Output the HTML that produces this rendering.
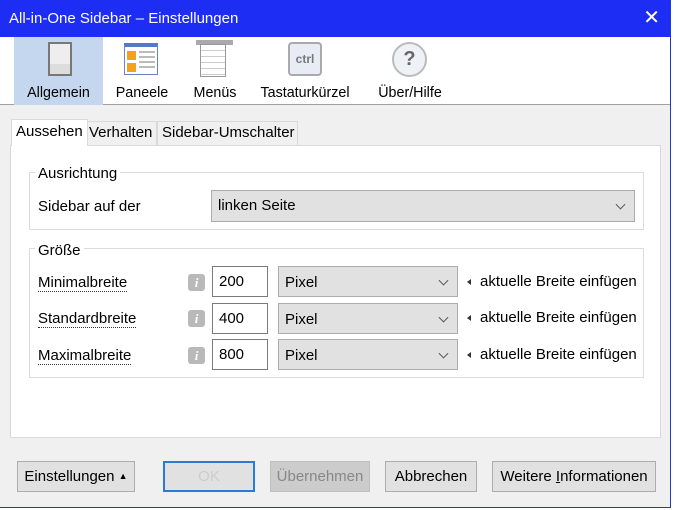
<!DOCTYPE html>
<html><head><meta charset="utf-8"><style>
*{box-sizing:border-box;margin:0;padding:0}
body{width:679px;height:510px;background:#fff;font-family:"Liberation Sans",sans-serif;font-size:15px;color:#000;position:relative;overflow:hidden}
.win{position:absolute;left:0;top:0;width:671px;height:508px;background:#f0f0f0;border-right:1px solid #1a3ad0;border-bottom:1px solid #1a3ad0}
.title{position:absolute;left:0;top:0;width:670px;height:37px;background:#1e2df3;color:#fff;font-size:15px;line-height:37px;padding-left:9px}
.x{position:absolute;right:10px;top:0;font-size:20px;color:#fff}
.tb{position:absolute;left:0;top:37px;width:670px;height:68px;background:#fff;border-bottom:1px solid #a0a0a0}
.ti{position:absolute;top:0;height:68px;text-align:center;font-size:14.3px}
.ti span{position:absolute;bottom:4px;left:0;right:0}
.abs{position:absolute}
.tab{position:absolute;top:121px;height:24px;border:1px solid #d9d9d9;border-bottom:none;background:#f0f0f0;line-height:22px;padding:0 4px;white-space:nowrap}
.panel{position:absolute;left:10px;top:145px;width:651px;height:293px;background:#fff;border:1px solid #d9d9d9}
.grp{position:absolute;border:1px solid #dcdcdc}
.lg{position:absolute;background:#fff;padding:0 3px}
.sel{position:absolute;background:#e1e1e1;border:1px solid #adadad;padding-left:6px}
.chev{position:absolute;right:10px;top:50%;width:7px;height:7px;border-right:1px solid #555;border-bottom:1px solid #555;transform:translateY(-70%) rotate(45deg)}
.inp{position:absolute;width:56px;height:31px;border:1px solid #7a7a7a;background:#fff;padding-left:6px;line-height:29px}
.lbl{position:absolute;left:38px;border-bottom:1px dotted #333;line-height:17px}
.info{position:absolute;left:188px;width:17px;height:17px;background:#b9b9b9;border-radius:3px;color:#fff;font-weight:bold;font-style:italic;font-size:13px;text-align:center;line-height:17px;font-family:"Liberation Serif",serif}
.ins{position:absolute;left:467px;white-space:nowrap}
.ins:before{content:"";position:absolute;left:0;top:6px;border:3px solid transparent;border-right:4px solid #333;border-left:none}
.btn{position:absolute;top:461px;height:31px;border:1px solid #adadad;background:#e1e1e1;text-align:center;line-height:29px;white-space:nowrap}
</style></head><body>
<div class="win">
<div class="title">All-in-One Sidebar – Einstellungen<span class="x">✕</span></div>
<div class="tb">
 <div class="ti" style="left:14px;width:89px;background:#c5d6ef"><div class="abs" style="left:34px;top:5px;width:24px;height:34px;border:2px solid #777;background:#eee;box-shadow:inset 0 -10px 0 #ddd"></div><span>Allgemein</span></div>
 <div class="ti" style="left:106px;width:72px"><div class="abs" style="left:18px;top:6px;width:34px;height:32px;border:1px solid #6b7fcf;background:#fff;border-top:4px solid #5577cc"></div><div class="abs" style="left:21px;top:14px;width:9px;height:9px;background:#f4a020"></div><div class="abs" style="left:21px;top:26px;width:9px;height:9px;background:#f4a020"></div><div class="abs" style="left:33px;top:14px;width:16px;height:18px;background:repeating-linear-gradient(#bbb 0 2px,#fff 2px 5px)"></div><span>Paneele</span></div>
 <div class="ti" style="left:185px;width:60px"><div class="abs" style="left:11px;top:3px;width:37px;height:5px;background:#aaa"></div><div class="abs" style="left:15px;top:7px;width:26px;height:33px;border:1px solid #999;background:repeating-linear-gradient(#fff 0 5px,#ccc 5px 6px)"></div><span>Menüs</span></div>
 <div class="ti" style="left:253px;width:104px"><div class="abs" style="left:35px;top:5px;width:34px;height:34px;border:2px solid #aaa;border-radius:4px;background:#e8edf5;color:#777;font-size:12px;font-weight:bold;line-height:30px">ctrl</div><span>Tastaturkürzel</span></div>
 <div class="ti" style="left:367px;width:86px"><div class="abs" style="left:25px;top:5px;width:35px;height:35px;border:2px solid #bbb;border-radius:50%;background:#eef2f7;color:#666;font-size:20px;font-weight:bold;line-height:31px">?</div><span>Über/Hilfe</span></div>
</div>
<div class="tab" style="left:11px;top:119px;height:27px;background:#fff;z-index:2;line-height:24px">Aussehen</div>
<div class="tab" style="left:85px;width:72px;padding:0 3px">Verhalten</div>
<div class="tab" style="left:157px;width:141px">Sidebar-Umschalter</div>
<div class="panel"></div>
<div class="grp" style="left:29px;top:172px;width:615px;height:58px;background:#fff"></div>
<div class="lg" style="left:35px;top:165px">Ausrichtung</div>
<div class="abs" style="left:38px;top:198px">Sidebar auf der</div>
<div class="sel" style="left:211px;top:190px;width:424px;height:32px;line-height:30px">linken Seite<div class="chev"></div></div>
<div class="grp" style="left:29px;top:248px;width:615px;height:130px"></div>
<div class="lg" style="left:35px;top:242px">Größe</div>
<div class="lbl" style="top:274px">Minimalbreite</div>
<div class="lbl" style="top:310px">Standardbreite</div>
<div class="lbl" style="top:347px">Maximalbreite</div>
<div class="info" style="top:274px">i</div><div class="info" style="top:310px">i</div><div class="info" style="top:347px">i</div>
<div class="inp" style="left:212px;top:266px">200</div>
<div class="inp" style="left:212px;top:303px">400</div>
<div class="inp" style="left:212px;top:339px">800</div>
<div class="sel" style="left:278px;top:266px;width:180px;height:31px;line-height:31px">Pixel<div class="chev"></div></div>
<div class="sel" style="left:278px;top:303px;width:180px;height:31px;line-height:31px">Pixel<div class="chev"></div></div>
<div class="sel" style="left:278px;top:339px;width:180px;height:31px;line-height:31px">Pixel<div class="chev"></div></div>
<div class="ins" style="top:273px;padding-left:13px">aktuelle Breite einfügen</div>
<div class="ins" style="top:309px;padding-left:13px">aktuelle Breite einfügen</div>
<div class="ins" style="top:346px;padding-left:13px">aktuelle Breite einfügen</div>
<div class="btn" style="left:17px;width:118px">Einstellungen <span style="font-size:9px;vertical-align:2px">▲</span></div>
<div class="btn" style="left:163px;width:92px;border:2px solid #2a7ad6;color:#ccc;line-height:27px">OK</div>
<div class="btn" style="left:270px;width:100px;background:#ccc;border-color:#bfbfbf;color:#888">Übernehmen</div>
<div class="btn" style="left:385px;width:92px">Abbrechen</div>
<div class="btn" style="left:492px;width:164px">Weitere <u>I</u>nformationen</div>
</div>
</body></html>
